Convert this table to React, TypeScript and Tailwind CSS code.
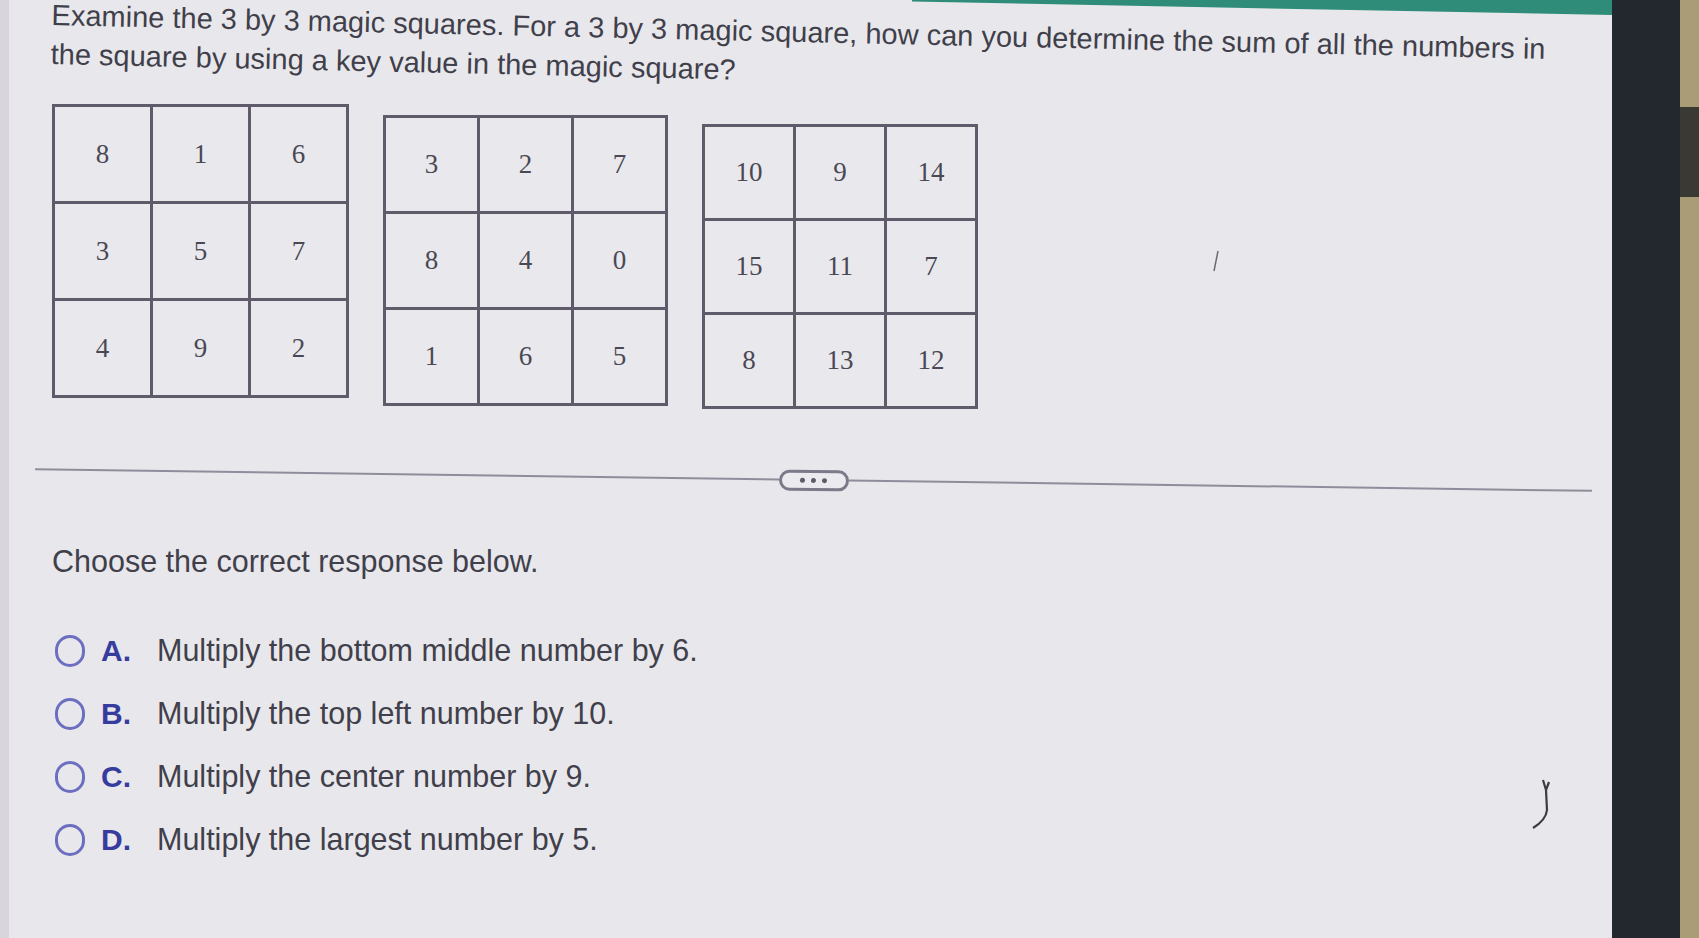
import React from 'react';

const squares = [
  { cells: ['8', '1', '6', '3', '5', '7', '4', '9', '2'], cell: 'w-[95px] h-[94px]', offset: 'mt-0' },
  { cells: ['3', '2', '7', '8', '4', '0', '1', '6', '5'], cell: 'w-[91px] h-[93px]', offset: 'mt-[11px]' },
  { cells: ['10', '9', '14', '15', '11', '7', '8', '13', '12'], cell: 'w-[88px] h-[91px]', offset: 'mt-[20px]' },
];

const choices = [
  { letter: 'A.', text: 'Multiply the bottom middle number by 6.' },
  { letter: 'B.', text: 'Multiply the top left number by 10.' },
  { letter: 'C.', text: 'Multiply the center number by 9.' },
  { letter: 'D.', text: 'Multiply the largest number by 5.' },
];

const MagicSquare = ({ cells, cell, offset }: { cells: string[]; cell: string; offset: string }) => (
  <div className={`grid grid-cols-3 gap-[3px] bg-[#5f5b6b] p-[3px] ${offset}`}>
    {cells.map((n, i) => (
      <div
        key={i}
        className={`${cell} flex items-center justify-center bg-[#e9e8ec] font-['Liberation_Serif',serif] text-[27px] text-[#4a4854]`}
      >
        {n}
      </div>
    ))}
  </div>
);

export default function App() {
  return (
    <div className="flex h-[938px] w-[1699px] overflow-hidden bg-[#22262c]">
      <main className="relative flex w-[1612px] shrink-0 flex-col border-l-[9px] border-[#d8d6dc] bg-[#e8e7ec] pl-[43px] font-['Liberation_Sans',Arial,sans-serif] text-[#403f4a]">
        <div className="absolute right-0 top-0 h-[15px] w-[700px] bg-[#2e8c79] [clip-path:polygon(0_0,100%_0,100%_100%,0_10%)]" />

        <div className="-mt-[4px] origin-top-left rotate-[1.3deg] text-[29px] leading-[39px]">
          <p className="whitespace-nowrap">
            Examine the 3 by 3 magic squares. For a 3 by 3 magic square, how can you determine the sum of all the numbers in
          </p>
          <p className="whitespace-nowrap">the square by using a key value in the magic square?</p>
        </div>

        <div className="mt-[30px] flex items-start gap-[34px]">
          {squares.map((s, i) => (
            <MagicSquare key={i} {...s} />
          ))}
        </div>

        <div className="-ml-[17px] mt-[60px] flex h-[22px] w-[1557px] rotate-[0.8deg] items-center">
          <div className="h-[2px] flex-1 bg-[#8f8d9c]" />
          <button className="flex h-[21px] w-[70px] items-center justify-center gap-[6px] rounded-full border-[3px] border-[#7c7a89] bg-[#ebeaee]">
            <span className="h-[5px] w-[5px] rounded-full bg-[#5d5b68]" />
            <span className="h-[5px] w-[5px] rounded-full bg-[#5d5b68]" />
            <span className="h-[5px] w-[5px] rounded-full bg-[#5d5b68]" />
          </button>
          <div className="h-[2px] flex-1 bg-[#8f8d9c]" />
        </div>

        <p className="mt-[52px] text-[30.5px] leading-[36px]">Choose the correct response below.</p>

        <div className="mt-[40px] flex flex-col">
          {choices.map((c) => (
            <label key={c.letter} className="flex h-[63px] items-center">
              <span className="ml-[3px] h-[32px] w-[30px] rounded-full border-[3px] border-[#6c6fc0]" />
              <span className="ml-[16px] w-[56px] text-[30px] font-bold text-[#363c9e]">{c.letter}</span>
              <span className="text-[30.5px]">{c.text}</span>
            </label>
          ))}
        </div>

        <svg className="absolute left-[1202px] top-[250px]" width="10" height="22" viewBox="0 0 10 22">
          <path d="M7 1 L3 21" stroke="#6b6a72" strokeWidth="1.5" fill="none" />
        </svg>
        <svg className="absolute left-[1520px] top-[778px]" width="26" height="54" viewBox="0 0 26 54">
          <path d="M14 2 L17 12 M20 4 L17 12 L18 32 Q17 42 4 50" stroke="#3c3b42" strokeWidth="2.2" fill="none" />
        </svg>
      </main>
      <div className="w-[68px] shrink-0 bg-[#23272e]" />
      <div className="flex flex-1 flex-col bg-[#a99c77]">
        <div className="mt-[107px] h-[90px] bg-[#3a3934]" />
      </div>
    </div>
  );
}
